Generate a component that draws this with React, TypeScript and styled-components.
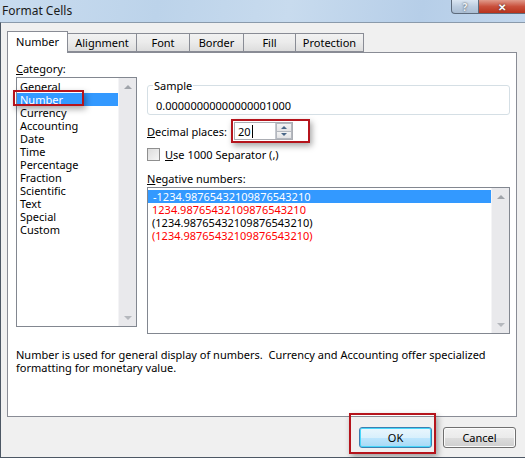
import React from 'react';
import styled, { createGlobalStyle } from 'styled-components';

const GlobalStyle = createGlobalStyle`
  html, body {
    margin: 0;
    padding: 0;
    background: #f0f0f0;
  }
  body {
    font-family: "Noto Sans", "Open Sans", sans-serif;
    font-size: 11px;
    color: #000;
  }
`;

const RED = '#b5141c';

const Window = styled.div`
  width: 525px;
  height: 458px;
  overflow: hidden;
  display: flex;
  flex-direction: column;
  background: #f0f0f0;
`;

const TitleBar = styled.div`
  height: 22px;
  flex: none;
  display: flex;
  align-items: flex-start;
  justify-content: space-between;
  background: linear-gradient(100deg, #c9dcef 0%, #bcd3ea 30%, #c8dbee 55%, #b6cee8 80%, #c2d7ed 100%);
`;

const Title = styled.div`
  font-size: 12px;
  padding: 2px 0 0 2px;
  color: #1a1a1a;
`;

const Controls = styled.div`
  display: flex;
  padding-left: 4px;
`;

const CaptionButton = styled.div<{ $close?: boolean }>`
  width: ${({ $close }) => ($close ? '46px' : '28px')};
  height: 14px;
  box-sizing: border-box;
  display: flex;
  align-items: center;
  justify-content: center;
  border: 1px solid #5d6b7c;
  border-top: none;
  border-right: ${({ $close }) => ($close ? 'none' : '1px solid #5d6b7c')};
  border-left: ${({ $close }) => ($close ? 'none' : '1px solid #5d6b7c')};
  border-radius: ${({ $close }) => ($close ? '0' : '0 0 0 4px')};
  background: ${({ $close }) =>
    $close
      ? 'linear-gradient(#e09a8b, #c9503c 50%, #b8321c)'
      : 'linear-gradient(#dbe6f2, #bccde0 50%, #aabdd3)'};
  color: ${({ $close }) => ($close ? '#fff' : '#eef3f8')};
  font-size: 10px;
  font-weight: bold;
  line-height: 12px;
  text-shadow: 0 0 2px #333;
`;

const Body = styled.div`
  flex: 1;
  border-top: 1px solid #8a9aab;
  border-left: 1px solid #4c5764;
  border-bottom: 1px solid #4c5764;
  padding: 8px 0 0 6px;
  display: flex;
  flex-direction: column;
`;

const TabStrip = styled.div`
  display: flex;
  align-items: flex-end;
  height: 21px;
  position: relative;
  z-index: 1;
`;

const Tab = styled.div<{ $active?: boolean; $w: number }>`
  width: ${({ $w }) => $w}px;
  box-sizing: border-box;
  border: 1px solid #898c95;
  border-bottom: ${({ $active }) => ($active ? 'none' : '1px solid #898c95')};
  margin-left: ${({ $active }) => ($active ? '0' : '-1px')};
  margin-bottom: ${({ $active }) => ($active ? '-1px' : '0')};
  height: ${({ $active }) => ($active ? '22px' : '19px')};
  background: ${({ $active }) => ($active ? '#fff' : 'linear-gradient(#f2f2f2, #ebebeb 50%, #dddddd)')};
  display: flex;
  align-items: center;
  justify-content: center;
  padding-bottom: ${({ $active }) => ($active ? '2px' : '0')};
  &:first-child {
    margin-left: 0;
  }
`;

const Panel = styled.div`
  width: 510px;
  height: 365px;
  box-sizing: border-box;
  border: 1px solid #898c95;
  background: #fff;
  padding: 9px 0 0 8px;
  display: flex;
  flex-direction: column;
`;

const Columns = styled.div`
  display: grid;
  grid-template-columns: 121px 363px;
  column-gap: 10px;
`;

const LeftCol = styled.div`
  display: flex;
  flex-direction: column;
`;

const RightCol = styled.div`
  display: flex;
  flex-direction: column;
  padding-top: 17px;
`;

const Label = styled.div`
  line-height: 13px;
  height: 13px;
`;

const U = styled.span`
  text-decoration: underline;
`;

const ListBox = styled.div<{ $h: number; $top?: number }>`
  height: ${({ $h }) => $h}px;
  margin-top: ${({ $top }) => $top ?? 0}px;
  box-sizing: border-box;
  border: 1px solid #828790;
  display: flex;
  background: #fff;
`;

const Items = styled.div`
  flex: 1;
  padding-top: 2px;
`;

const Item = styled.div<{ $selected?: boolean; $red?: boolean; $indent: number }>`
  height: 13px;
  line-height: 13px;
  padding-left: ${({ $indent }) => $indent}px;
  color: ${({ $selected, $red }) => ($selected ? '#fff' : $red ? '#ff0000' : '#000')};
  background: ${({ $selected }) => ($selected ? '#3399ff' : 'transparent')};
  white-space: nowrap;
`;

const Scrollbar = styled.div`
  width: 17px;
  background: #e9e9ec;
  border-left: 1px solid #f4f4f6;
  display: flex;
  flex-direction: column;
  justify-content: space-between;
  align-items: center;
  padding: 7px 0 6px;
`;

const Arrow = styled.div<{ $down?: boolean }>`
  width: 0;
  height: 0;
  border-left: 4px solid transparent;
  border-right: 4px solid transparent;
  border-bottom: ${({ $down }) => ($down ? 'none' : '4px solid #a0a4aa')};
  border-top: ${({ $down }) => ($down ? '4px solid #b5b8bd' : 'none')};
`;

const Highlight = styled.div`
  position: relative;
`;

const RedBox = styled.div`
  position: absolute;
  border: 2px solid ${RED};
  box-shadow: 2px 3px 6px rgba(0, 0, 0, 0.35);
  pointer-events: none;
`;

const GroupBox = styled.fieldset`
  margin: 0;
  height: 36px;
  box-sizing: border-box;
  border: 1px solid #d5dfe5;
  border-radius: 3px;
  padding: 0 0 0 8px;
  position: relative;
  legend {
    padding: 0 1px;
    margin-left: -3px;
    line-height: 13px;
  }
`;

const SampleValue = styled.div`
  line-height: 13px;
  position: absolute;
  left: 8px;
  top: 7px;
`;

const DecimalRow = styled.div`
  display: flex;
  align-items: center;
  margin-top: 7px;
  height: 18px;
`;

const DecimalLabel = styled.div`
  width: 87px;
`;

const SpinBox = styled.div`
  width: 59px;
  height: 18px;
  box-sizing: border-box;
  border: 1px solid #abadb3;
  display: flex;
  align-items: center;
`;

const SpinText = styled.div`
  flex: 1;
  padding-left: 3px;
  display: flex;
  align-items: center;
`;

const Caret = styled.span`
  display: inline-block;
  width: 1px;
  height: 13px;
  background: #000;
  margin-left: 1px;
`;

const SpinButtons = styled.div`
  width: 16px;
  height: 16px;
  display: flex;
  flex-direction: column;
  border-left: 1px solid #c6c9cf;
`;

const SpinHalf = styled.div`
  flex: 1;
  display: flex;
  align-items: center;
  justify-content: center;
  background: linear-gradient(#f3f3f3, #e3e3e5);
  border: 1px solid #b4b8bf;
  &:first-child {
    border-bottom: none;
  }
`;

const SmallArrow = styled.div<{ $down?: boolean }>`
  width: 0;
  height: 0;
  border-left: 3px solid transparent;
  border-right: 3px solid transparent;
  border-bottom: ${({ $down }) => ($down ? 'none' : '3px solid #4a6788')};
  border-top: ${({ $down }) => ($down ? '3px solid #4a6788' : 'none')};
`;

const CheckRow = styled.div`
  display: flex;
  align-items: center;
  margin-top: 7px;
  gap: 5px;
`;

const CheckBox = styled.div`
  width: 13px;
  height: 13px;
  box-sizing: border-box;
  border: 1px solid #8f8f8f;
  background: linear-gradient(135deg, #dcdcdc, #f6f6f6);
`;

const NegLabel = styled(Label)`
  margin-top: 10px;
  margin-bottom: 2px;
`;

const Description = styled.div`
  margin-top: 14px;
  line-height: 13px;
  width: 480px;
`;

const Footer = styled.div`
  display: flex;
  justify-content: flex-end;
  gap: 11px;
  padding: 10px 9px 0 0;
`;

const Button = styled.div<{ $default?: boolean }>`
  width: 73px;
  height: 21px;
  box-sizing: border-box;
  border: 1px solid ${({ $default }) => ($default ? '#3c7fb1' : '#707070')};
  border-radius: 3px;
  background: ${({ $default }) =>
    $default
      ? 'linear-gradient(#eaf6fd, #d9f0fc 50%, #bee6fd 51%, #a7d9f5)'
      : 'linear-gradient(#f2f2f2, #ebebeb 50%, #dddddd 51%, #cfcfcf)'};
  box-shadow: inset 0 0 0 1px ${({ $default }) => ($default ? '#48d7fa' : '#fcfcfc')};
  display: flex;
  align-items: center;
  justify-content: center;
`;

const categories = [
  'General',
  'Number',
  'Currency',
  'Accounting',
  'Date',
  'Time',
  'Percentage',
  'Fraction',
  'Scientific',
  'Text',
  'Special',
  'Custom',
];

const negatives = [
  { text: '-1234.98765432109876543210', red: false },
  { text: '1234.98765432109876543210', red: true },
  { text: '(1234.98765432109876543210)', red: false },
  { text: '(1234.98765432109876543210)', red: true },
];

const tabs = [
  { name: 'Number', w: 61 },
  { name: 'Alignment', w: 70 },
  { name: 'Font', w: 54 },
  { name: 'Border', w: 55 },
  { name: 'Fill', w: 53 },
  { name: 'Protection', w: 69 },
];

export default function App() {
  return (
    <>
      <GlobalStyle />
      <Window>
        <TitleBar>
          <Title>Format Cells</Title>
          <Controls>
            <CaptionButton>?</CaptionButton>
            <CaptionButton $close>✕</CaptionButton>
          </Controls>
        </TitleBar>
        <Body>
          <TabStrip>
            {tabs.map((t, i) => (
              <Tab key={t.name} $w={t.w} $active={i === 0}>
                {t.name}
              </Tab>
            ))}
          </TabStrip>
          <Panel>
            <Columns>
              <LeftCol>
                <Label>
                  <U>C</U>ategory:
                </Label>
                <Highlight>
                  <ListBox $h={250} $top={2}>
                    <Items>
                      {categories.map((c, i) => (
                        <Item key={c} $indent={3} $selected={i === 1}>
                          {c}
                        </Item>
                      ))}
                    </Items>
                    <Scrollbar>
                      <Arrow />
                      <Arrow $down />
                    </Scrollbar>
                  </ListBox>
                  <RedBox style={{ left: -3, top: 15, width: 67, height: 12 }} />
                </Highlight>
              </LeftCol>
              <RightCol>
                <GroupBox>
                  <legend>Sample</legend>
                  <SampleValue>0.00000000000000001000</SampleValue>
                </GroupBox>
                <Highlight>
                  <DecimalRow>
                    <DecimalLabel>
                      <U>D</U>ecimal places:
                    </DecimalLabel>
                    <SpinBox>
                      <SpinText>
                        20
                        <Caret />
                      </SpinText>
                      <SpinButtons>
                        <SpinHalf>
                          <SmallArrow />
                        </SpinHalf>
                        <SpinHalf>
                          <SmallArrow $down />
                        </SpinHalf>
                      </SpinButtons>
                    </SpinBox>
                  </DecimalRow>
                  <RedBox style={{ left: 84, top: 4, width: 75, height: 20 }} />
                </Highlight>
                <CheckRow>
                  <CheckBox />
                  <span>
                    <U>U</U>se 1000 Separator (,)
                  </span>
                </CheckRow>
                <NegLabel>
                  <U>N</U>egative numbers:
                </NegLabel>
                <ListBox $h={147}>
                  <Items>
                    {negatives.map((n, i) => (
                      <Item key={i} $indent={i === 0 ? 5 : 4} $selected={i === 0} $red={n.red}>
                        {n.text}
                      </Item>
                    ))}
                  </Items>
                  <Scrollbar>
                    <Arrow />
                    <Arrow $down />
                  </Scrollbar>
                </ListBox>
              </RightCol>
            </Columns>
            <Description>
              Number is used for general display of numbers.&nbsp; Currency and Accounting offer specialized
              formatting for monetary value.
            </Description>
          </Panel>
          <Footer>
            <Highlight>
              <Button $default>OK</Button>
              <RedBox style={{ left: -10, top: -14, width: 83, height: 37 }} />
            </Highlight>
            <Button>Cancel</Button>
          </Footer>
        </Body>
      </Window>
    </>
  );
}
